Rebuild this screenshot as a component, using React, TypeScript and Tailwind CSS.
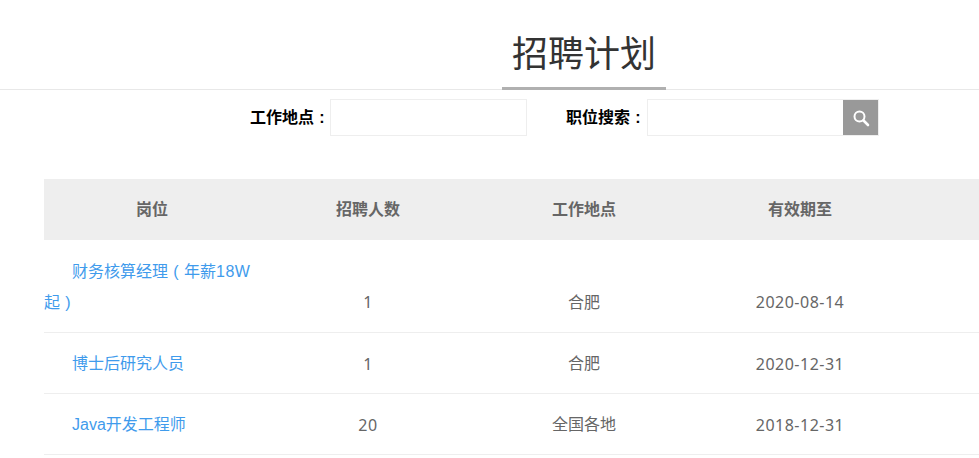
import React from "react";

const rows = [
  { n: "1", p: "合肥", d: "2020-12-31", t: "博士后研究人员" },
  { n: "20", p: "全国各地", d: "2018-12-31", t: "Java开发工程师" },
];

function Colon() {
  return <span className="inline-block w-[16px] text-center leading-none">:</span>;
}

function Paren({ c }: { c: string }) {
  return <span className="inline-block w-[16px] indent-0 text-center">{c}</span>;
}

const numCell = "w-[216px] font-['Noto_Sans','Noto_Sans_CJK_SC',sans-serif] tracking-[0.5px]";

export default function App() {
  return (
    <div className="w-[979px] h-[458px] overflow-hidden bg-white font-['Liberation_Sans','Noto_Sans_CJK_SC',sans-serif] text-[16px]">
      <div className="h-[90px] border-b border-[#e8e8e8] pl-[502px]">
        <div className="w-[164px] h-[90px] border-b-[3px] border-[#b0b0b0] text-center text-[36px] leading-[50px] pt-[30px] text-[#333]">
          招聘计划
        </div>
      </div>
      <div className="flex h-[89px] pt-[9px] pl-[250px]">
        <span className="font-bold text-black leading-[37px] w-[80px] whitespace-nowrap">工作地点<Colon /></span>
        <div className="w-[197px] h-[37px] border border-[#eeeeee]" />
        <span className="font-bold text-black leading-[37px] ml-[39px] w-[81px] whitespace-nowrap">职位搜索<Colon /></span>
        <div className="w-[232px] h-[37px] border border-[#eeeeee] flex justify-end">
          <div className="w-[35px] h-[35px] bg-[#999999] flex items-center justify-center">
            <svg width="18" height="18" viewBox="0 0 18 18" fill="none" stroke="#fff">
              <circle cx="7.5" cy="7.5" r="5" strokeWidth="2" />
              <path d="M11.5 11.5L16 16" strokeWidth="2.6" strokeLinecap="round" />
            </svg>
          </div>
        </div>
      </div>
      <div className="ml-[44px] w-[1080px]">
        <div className="flex h-[61px] bg-[#eeeeee] pt-[1px] font-bold text-[#666666] text-center leading-[60px]">
          <div className="w-[216px]">岗位</div>
          <div className="w-[216px]">招聘人数</div>
          <div className="w-[216px]">工作地点</div>
          <div className="w-[216px]">有效期至</div>
        </div>
        <div className="flex items-end h-[93px] pb-[14px] border-b border-[#eeeeee] leading-[31px] text-[#666666] text-center">
          <div className="w-[216px] pr-[4px] text-left indent-[28px] text-[#3f9bec]">
            财务核算经理<Paren c="(" />年薪<span className="tracking-[0.5px]">18W</span>起<Paren c=")" />
          </div>
          <div className={numCell}>1</div>
          <div className="w-[216px]">合肥</div>
          <div className={numCell}>2020-08-14</div>
        </div>
        {rows.map((r) => (
          <div key={r.d} className="flex items-end h-[61px] pb-[14px] border-b border-[#eeeeee] leading-[30px] text-[#666666] text-center">
            <div className="w-[216px] pr-[4px] text-left indent-[28px] text-[#3f9bec]">{r.t}</div>
            <div className={numCell}>{r.n}</div>
            <div className="w-[216px]">{r.p}</div>
            <div className={numCell}>{r.d}</div>
          </div>
        ))}
      </div>
    </div>
  );
}
